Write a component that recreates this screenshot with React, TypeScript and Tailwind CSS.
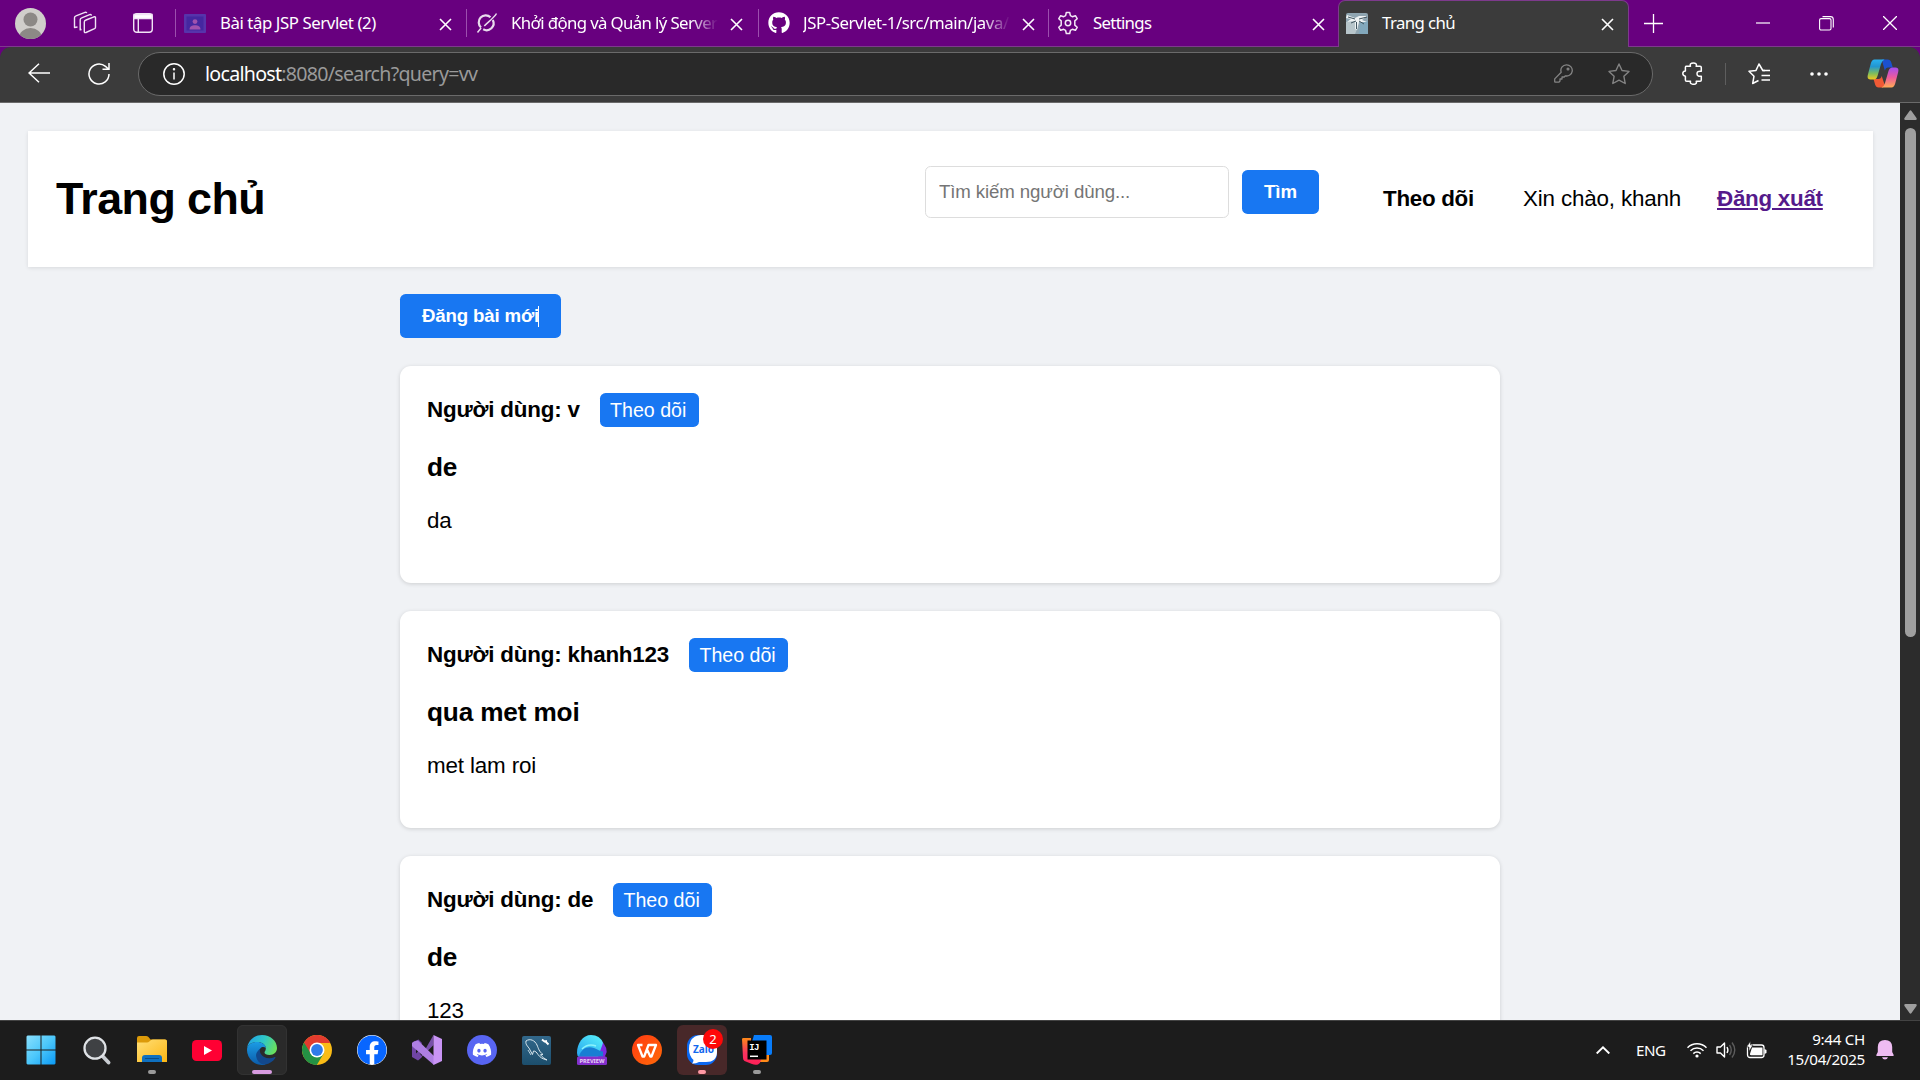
import type { ReactNode } from "react";
import { FaDiscord, FaFacebook, FaGithub } from "react-icons/fa";

const UI = "font-['Noto_Sans','Open_Sans',sans-serif]";

function CloseIcon() {
  return (
    <svg width="13" height="13" viewBox="0 0 13 13" fill="none" stroke="#fff" strokeWidth="1.6">
      <path d="M1 1l11 11M12 1L1 12" />
    </svg>
  );
}

function ClassroomIcon() {
  return (
    <svg className="-ml-[2px]" width="22" height="19" viewBox="0 0 22 19">
      <rect width="22" height="19" rx="1" fill="#5634ab" />
      <rect x="2.5" y="2.5" width="17" height="14" fill="#4527a0" />
      <circle cx="11" cy="7.6" r="2.4" fill="#a052ae" />
      <path d="M5.5 15.5c0-3 2.500-4.200 5.500-4.200s5.500 1.200 5.500 4.200z" fill="#a052ae" />
    </svg>
  );
}

function GrokIcon() {
  return (
    <svg width="22" height="22" viewBox="0 0 22 22" fill="none" stroke="#e8dcec" strokeWidth="2.200">
      <path d="M14.500 5.200A7 7 0 0 0 5 15.500M16.800 8a7 7 0 0 1-9.600 9.300" />
      <path d="M20.500 1.500C18 6 12 10 8.300 14M1.500 20.500l3.600-4.500" strokeWidth="1.500" />
    </svg>
  );
}

function GearIcon() {
  return (
    <svg className="-ml-[2px]" width="24" height="24" viewBox="0 0 24 24" fill="none" stroke="#f3e8f6" strokeWidth="1.500" strokeLinejoin="round">
      <circle cx="12" cy="12" r="2.700" />
      <path d="M10.300 1.500h3.400l.7 3.200 1.900 1 3.100-1 1.800 3-2.400 2.200v4.200l2.400 2.200-1.800 3-3.100-1-1.900 1-.7 3.200h-3.400l-.7-3.200-1.900-1-3.100 1-1.800-3 2.400-2.200V9.900L2.800 7.700l1.800-3 3.100 1 1.900-1z" />
    </svg>
  );
}

function PhotoFavicon() {
  return (
    <svg width="22" height="21" viewBox="0 0 22 21">
      <rect width="22" height="21" rx="2" fill="#8fa5b1" />
      <path d="M0 9l9-1 3 6-3 7H0z" fill="#b7c5ca" />
      <path d="M14 10l8-2v13h-9z" fill="#82a8bc" />
      <path d="M1 2l8 3 4-2 8 0-5 4 5 2-8 0-2 8-2-1 0-8-8 1 4-3-5-1z" fill="#eef2f3" />
      <path d="M2 4l7 2M13 6l8-2M10 8l-5 2M13 8l5 3M10.500 9v7" stroke="#40545f" strokeWidth="1" fill="none" />
    </svg>
  );
}

interface TabProps {
  icon: ReactNode;
  title: string;
  tracking: string;
  width: string;
  fade?: boolean;
}

function BrowserTab({ icon, title, tracking, width, fade }: TabProps) {
  return (
    <div className={`flex h-[46px] shrink-0 items-center ${width}`}>
      <div className="h-[28px] w-px bg-[#9c4fae]" />
      <div className="ml-[6px] flex w-[27px] items-center justify-center">{icon}</div>
      <div
        className={`ml-[11px] w-[209px] overflow-hidden whitespace-nowrap text-[16.8px] leading-[24px] text-white ${tracking} ${
          fade ? "[mask-image:linear-gradient(to_right,#000_180px,transparent_207px)]" : ""
        }`}
      >
        {title}
      </div>
      <div className="ml-[10px] mt-[2px]">
        <CloseIcon />
      </div>
    </div>
  );
}

function TabStrip() {
  return (
    <div className="flex h-[47px] shrink-0 border-b border-[#7d3a8c] bg-[#68007f]">
      <div className="flex w-[175px] items-center">
        <svg className="ml-[15px]" width="31" height="31" viewBox="0 0 31 31">
          <clipPath id="avatar">
            <circle cx="15.500" cy="15.500" r="15.500" />
          </clipPath>
          <g clipPath="url(#avatar)">
            <rect width="31" height="31" fill="#d0cecb" />
            <circle cx="15.500" cy="11.500" r="7" fill="#8c8986" />
            <ellipse cx="15.500" cy="30" rx="11.500" ry="10" fill="#8c8986" />
          </g>
        </svg>
        <svg className="ml-[27px]" width="24" height="24" viewBox="0 0 24 24" fill="none" stroke="#f1e3f5" strokeWidth="1.400" strokeLinejoin="round">
          <path d="M13 9l8-3.200q1.500-.4 1.500 1v9.400q0 1-1 1.500L13 21.500q-1.700.6-1.700-1V11q0-1.400 1.700-2z" />
          <path d="M8.500 18.500l-1.300.3V8.800q0-1.500 1.500-2l8-3.200q1.500-.3 1.700 1" />
          <path d="M4.500 16l-3 .5V6.800q0-1.500 1.500-2l9-3.500q1.400-.4 1.700.9" />
        </svg>
        <svg className="ml-[36px]" width="20" height="20" viewBox="0 0 20 20" fill="none" stroke="#f1e3f5" strokeWidth="1.400">
          <rect x=".7" y=".7" width="18.600" height="18.600" rx="3" />
          <path d="M1 1.500h18v4H1z" fill="#fff" />
          <path d="M5.300 6v13" />
        </svg>
      </div>
      <BrowserTab width="w-[291px]" icon={<ClassroomIcon />} title="Bài tập JSP Servlet (2)" tracking="tracking-[-0.42px]" />
      <BrowserTab width="w-[292px]" icon={<GrokIcon />} title="Khởi động và Quản lý Server" tracking="tracking-[-0.62px]" fade />
      <BrowserTab width="w-[290px]" icon={<FaGithub size={22} color="#fff" />} title="JSP-Servlet-1/src/main/java/" tracking="tracking-[-0.42px]" fade />
      <BrowserTab width="w-[290px]" icon={<GearIcon />} title="Settings" tracking="tracking-[-0.7px]" />
      <div className="z-10 flex h-[47px] w-[291px] shrink-0 items-center rounded-t-[7px] border border-b-0 border-[#7d3a8c] bg-[#3b3b3b]">
        <div className="mb-[2px] ml-[7px]">
          <PhotoFavicon />
        </div>
        <div className="mb-[2px] ml-[14px] w-[219px] text-[16.8px] leading-[24px] tracking-[-0.6px] text-white">Trang chủ</div>
        <CloseIcon />
      </div>
      <div className="flex items-center">
        <svg className="ml-[15px]" width="19" height="19" viewBox="0 0 19 19" stroke="#fff" strokeWidth="1.300">
          <path d="M0 9.500h19M9.500 0v19" />
        </svg>
        <svg className="ml-[93px]" width="14" height="2" viewBox="0 0 14 2">
          <path d="M0 1h14" stroke="#fff" strokeWidth="1.200" />
        </svg>
        <svg className="ml-[49px]" width="15" height="15" viewBox="0 0 15 15" fill="none" stroke="#fff" strokeWidth="1.100">
          <rect x=".6" y="2.600" width="11.400" height="11.400" rx="1.500" />
          <path d="M3.500.6h8q2.800 0 2.800 2.800v8" />
        </svg>
        <svg className="ml-[49px]" width="14" height="14" viewBox="0 0 14 14" stroke="#fff" strokeWidth="1.300">
          <path d="M0 0l14 14M14 0L0 14" />
        </svg>
      </div>
    </div>
  );
}

function CopilotIcon() {
  return (
    <svg width="32" height="29" viewBox="0 0 32 29">
      <defs>
        <linearGradient id="cpA" x1="0" y1="0" x2="0" y2="1">
          <stop offset="0" stopColor="#29b1f0" />
          <stop offset=".35" stopColor="#2296d0" />
          <stop offset=".7" stopColor="#7fbd5c" />
          <stop offset="1" stopColor="#f2c81e" />
        </linearGradient>
        <linearGradient id="cpB" x1="0" y1="0" x2="0" y2="1">
          <stop offset="0" stopColor="#a44df0" />
          <stop offset=".5" stopColor="#ee5b9b" />
          <stop offset="1" stopColor="#ffab55" />
        </linearGradient>
      </defs>
      <path d="M15 .5h5.500q3 0 3.800 3l1.500 5h-5q-2 0-3 3l-2-7z" fill="#1b50cf" />
      <path d="M16 28.500h-4.500q-2.500 0-3.400-3L6.500 20h5q2.500 0 3.200-3l3 9z" fill="#f05a35" />
      <path d="M7.500.5h10q-2.500 1-3.500 4.500l-3.500 12q-1 3.500-4 3.500h-3Q-.2 20.500.8 16l3-11.500Q5 .5 7.500.5z" fill="url(#cpA)" />
      <path d="M24.500 28.500h-10q2.500-1 3.500-4.500l3.500-12q1-3.500 4-3.500h3q3.700 0 2.700 4.500l-3 11.500q-1.200 4-3.700 4z" fill="url(#cpB)" />
    </svg>
  );
}

function Toolbar() {
  return (
    <div className="h-[56px] shrink-0 bg-[#68007f]">
      <div className="flex h-[56px] items-center rounded-t-[11px] border-b border-[#6a6a6a] bg-[#3b3b3b] pb-[2px]">
        <svg className="mb-px ml-[28px]" width="22" height="20" viewBox="0 0 22 20" fill="none" stroke="#fff" strokeWidth="1.500">
          <path d="M22 10H1M11 .7L1 10l10 9.300" />
        </svg>
        <svg className="ml-[38px]" width="22" height="22" viewBox="0 0 22 22" fill="none" stroke="#fff" strokeWidth="1.500">
          <path d="M21 11a10 10 0 1 1-3.500-7.600L20.500 6M21 0v6.300h-6.500" />
        </svg>
        <div className="ml-[28px] flex h-[44px] w-[1515px] items-center rounded-full border border-[#6a6a6a] bg-[#292929]">
          <svg className="ml-[24px]" width="22" height="22" viewBox="0 0 22 22" fill="none" stroke="#fff" strokeWidth="1.500">
            <circle cx="11" cy="11" r="10.200" />
            <path d="M11 9.500v7" />
            <circle cx="11" cy="6.300" r=".5" fill="#fff" />
          </svg>
          <div className="ml-[20px] w-[1349px] whitespace-nowrap text-[19.6px] leading-[28px] tracking-[-0.72px] text-[#9a9a9a]">
            <span className="text-white">localhost</span>:8080/search?query=vv
          </div>
          <svg width="19" height="19" viewBox="0 0 19 19" fill="none" stroke="#848484" strokeWidth="1.300" strokeLinejoin="round">
            <path d="M12.500.8a5.600 5.600 0 1 1-1.300 11l-1 1.200H8v2H6v2l-1 1.200H1.200q-.5 0-.5-.5v-2.800l6.500-6.600A5.600 5.600 0 0 1 12.500.8z" />
            <circle cx="14" cy="5" r=".9" />
          </svg>
          <svg className="ml-[35px]" width="22" height="22" viewBox="0 0 22 22" fill="none" stroke="#848484" strokeWidth="1.400" strokeLinejoin="round">
            <path d="M11 1l3 6.500 7 .9-5.100 4.900 1.300 7.200L11 17.200l-6.200 3.300 1.300-7.200L1 8.400l7-.9z" />
          </svg>
        </div>
        <svg className="ml-[29px]" width="21" height="23" viewBox="0 0 21 23" fill="none" stroke="#fff" strokeWidth="1.500" strokeLinejoin="round">
          <path d="M4 4.300h4.500C7.600 2 9 .9 11.300.9S15 2 14.200 4.300H18q1.300 0 1.300 1.300v3.700c-3-.4-4.300.6-4.300 2.500s1.500 2.900 4.300 2.400V18q0 1.300-1.300 1.300h-3.800c.8 1.900-.5 3-2.700 3s-3.700-1.100-3-3H4.700q-1.300 0-1.300-1.300v-3.800C1.700 14 .8 13.200.8 11.600s1-2.500 2.600-2.600V5.600q0-1.300.6-1.300z" />
        </svg>
        <div className="ml-[22px] h-[22px] w-px bg-[#5e5e5e]" />
        <svg className="ml-[22px]" width="23" height="22" viewBox="0 0 23 22" fill="none" stroke="#fff" strokeWidth="1.500" strokeLinejoin="round">
          <path d="M17 7.500h-2.200L11 1 8 7.400l-7 .9 5 4.900-1.300 7.300 5.800-3" />
          <path d="M14.500 7.500H22M13.500 12.500H22M13.500 17H22" />
        </svg>
        <svg className="ml-[39px] mt-px" width="18" height="4" viewBox="0 0 18 4" fill="#fff">
          <circle cx="2" cy="2" r="1.800" />
          <circle cx="9" cy="2" r="1.800" />
          <circle cx="16" cy="2" r="1.800" />
        </svg>
        <div className="ml-[39px]">
          <CopilotIcon />
        </div>
      </div>
    </div>
  );
}

function PostCard({ user, title, body }: { user: string; title: string; body: string }) {
  return (
    <article className="mb-[28px] h-[217px] shrink-0 rounded-[11px] bg-white px-[27px] pt-[27px] shadow-[0_1px_4px_rgba(0,0,0,0.15)]">
      <div className="flex h-[34px] items-center gap-[20px]">
        <div className="text-[22.4px] font-bold leading-[26px] tracking-[-0.2px]">Người dùng: {user}</div>
        <button className="h-[34px] w-[99px] rounded-[5.600px] bg-[#1877f2] pr-[2px] text-[19.6px] leading-[34px] text-white">Theo dõi</button>
      </div>
      <h3 className="mt-[25px] text-[26.2px] font-bold leading-[30px] tracking-[-0.15px]">{title}</h3>
      <p className="mt-[26px] text-[22.4px] leading-[26px] tracking-[-0.15px]">{body}</p>
    </article>
  );
}

function Page() {
  return (
    <main className="flex h-[917px] w-[1900px] flex-col overflow-hidden bg-[#f0f2f5] px-[28px] pt-[28px] font-['Liberation_Sans',Arial,sans-serif] text-black">
      <header className="flex h-[136px] w-[1845px] shrink-0 items-center bg-white pl-[28px] shadow-[0_1px_4px_rgba(0,0,0,0.1)]">
        <h1 className="w-[869px] pb-[2px] text-[44.8px] font-bold leading-[52px] tracking-[-0.55px]">Trang chủ</h1>
        <div className="mb-[14px] flex items-center">
          <input
            className="h-[52px] w-[304px] rounded-[5.600px] border border-[#ddd] pl-[13px] text-[18.667px] tracking-[-0.12px] placeholder:text-[#757575]"
            placeholder="Tìm kiếm người dùng..."
          />
          <button className="ml-[13px] h-[44px] w-[77px] rounded-[5.600px] bg-[#1877f2] text-[18.667px] font-bold text-white">Tìm</button>
        </div>
        <nav className="flex items-center text-[22.4px] leading-[26px] whitespace-nowrap">
          <span className="ml-[64px] w-[140px] font-bold tracking-[-0.3px]">Theo dõi</span>
          <span className="w-[194px] tracking-[-0.17px]">Xin chào, khanh</span>
          <a className="font-bold tracking-[-0.27px] text-[#551a8b] underline">Đăng xuất</a>
        </nav>
      </header>
      <section className="ml-[372px] mt-[27px] flex w-[1100px] flex-col">
        <button className="mb-[28px] flex h-[44px] w-[161px] shrink-0 items-center rounded-[5.600px] bg-[#1877f2] pl-[22px] text-[18.667px] font-bold text-white">
          <span className="whitespace-nowrap tracking-[-0.16px]">Đăng bài mới</span>
          <span className="-ml-px h-[21px] w-px bg-white" />
        </button>
        <PostCard user="v" title="de" body="da" />
        <PostCard user="khanh123" title="qua met moi" body="met lam roi" />
        <PostCard user="de" title="de" body="123" />
      </section>
    </main>
  );
}

function ScrollBar() {
  return (
    <div className="flex h-[917px] w-[20px] flex-col items-center bg-[#2c2c2c]">
      <svg className="mt-[7px] shrink-0" width="13" height="10" viewBox="0 0 13 10" fill="#9f9f9f">
        <path d="M5.500 1q1-1.500 2 0l5 7q.8 2-1 2h-10q-1.800 0-1-2z" />
      </svg>
      <div className="mt-[8px] h-[509px] w-[11px] rounded-full bg-[#9f9f9f]" />
      <div className="grow" />
      <svg className="mb-[6px] shrink-0" width="13" height="10" viewBox="0 0 13 10" fill="#9f9f9f">
        <path d="M5.500 9q1 1.500 2 0l5-7q.8-2-1-2h-10q-1.800 0-1 2z" />
      </svg>
    </div>
  );
}

function WindowsIcon() {
  return (
    <svg className="-ml-[3px]" width="30" height="30" viewBox="0 0 30 30">
      <defs>
        <linearGradient id="win" x1="0" y1="0" x2="1" y2="1">
          <stop offset="0" stopColor="#8ae0fd" />
          <stop offset=".5" stopColor="#4cc7fb" />
          <stop offset="1" stopColor="#0a99f5" />
        </linearGradient>
      </defs>
      <path d="M1.500.5h13v14H.5v-13zM15.500.5h13l1 1v13h-14zM.5 15.500h14v14h-13l-1-1zM15.500 15.500h14v13l-1 1h-13z" fill="url(#win)" />
    </svg>
  );
}

function SearchIcon() {
  return (
    <svg width="28" height="29" viewBox="0 0 28 29" fill="none">
      <path d="M19 19.500l6.500 7" stroke="#c8ccd1" strokeWidth="3.800" strokeLinecap="round" />
      <circle cx="12" cy="12.200" r="10.500" fill="#3f4144" stroke="#dfe2e6" strokeWidth="2.300" />
    </svg>
  );
}

function FolderIcon() {
  return (
    <svg width="30" height="28" viewBox="0 0 30 28">
      <defs>
        <linearGradient id="fold" x1="0" y1="0" x2="1" y2="1">
          <stop offset="0" stopColor="#ffdf77" />
          <stop offset="1" stopColor="#fcb613" />
        </linearGradient>
      </defs>
      <path d="M0 2q0-2 2-2h7q1.500 0 2.500 1l2 2.500H28q2 0 2 2V10H0z" fill="#dc9a09" />
      <path d="M0 6.500h10q1.300 0 2.300-1l1.200-1q1-.9 2.500-.9H28q2 0 2 2V26H0z" fill="url(#fold)" />
      <path d="M5 26v-4q0-3 3-3h14q3 0 3 3v4z" fill="#0f70bf" />
      <path d="M8.500 22.500h13" stroke="#0a4b86" strokeWidth="1.200" strokeLinecap="round" />
    </svg>
  );
}

function YoutubeIcon() {
  return (
    <svg width="30" height="21" viewBox="0 0 30 21">
      <rect width="30" height="21" rx="4.500" fill="#ff0033" />
      <path d="M12 6l8 4.500-8 4.500z" fill="#fff" />
    </svg>
  );
}

function EdgeIcon() {
  return (
    <svg width="30" height="30" viewBox="0 0 30 30">
      <defs>
        <linearGradient id="edTop" x1="0" y1=".3" x2="1" y2=".6">
          <stop offset="0" stopColor="#21a4e6" />
          <stop offset=".5" stopColor="#2fc7c7" />
          <stop offset="1" stopColor="#6be15a" />
        </linearGradient>
        <linearGradient id="edLeft" x1="0" y1="0" x2="0" y2="1">
          <stop offset="0" stopColor="#1b9ce5" />
          <stop offset="1" stopColor="#0b5ba9" />
        </linearGradient>
      </defs>
      <path d="M0 13.500C1 5.500 7 0 15 0c8.500 0 15 6 15 13 0 4-3 7-7.500 7-3 0-5-1.200-5-2.500 0-1.200 1.300-1.600 1.300-4 0-4-4-6.500-8.300-6.500C5 7 1 9.500 0 13.500z" fill="url(#edTop)" />
      <path d="M0 15C0 10 4.500 7 10 7c5 0 8.500 2.500 8.800 6-1.500-1.300-4-1.300-5.500.5-2.500 3-1 8.500 3 11.500 2 1.500 4 2.500 1.500 4.700A15 15 0 0 1 0 15z" fill="url(#edLeft)" />
      <path d="M13.300 13.500c-2.500 2-5 5-4 8.500 1.200 5 5 7.800 9 7.500 4-.8 7.800-3 10-6.500.5-.8-.2-1.200-1-.8-5.500 2.300-11.500.5-13.700-3.700-.8-1.800-1-3.500-.3-5z" fill="#12488c" />
    </svg>
  );
}

function ChromeIcon() {
  return (
    <svg width="30" height="30" viewBox="0 0 30 30">
      <circle cx="15" cy="15" r="15" fill="#fbbc16" />
      <path d="M15 15L2 7.500A15 15 0 0 0 14.800 30L22 18z" fill="#249244" />
      <path d="M15 8H28.300A15 15 0 0 0 2 7.500L8.800 18.500z" fill="#e33b2e" />
      <circle cx="15" cy="15" r="7.500" fill="#fff" />
      <circle cx="15" cy="15" r="5.900" fill="#2f7bea" />
    </svg>
  );
}

function VisualStudioIcon() {
  return (
    <svg width="30" height="30" viewBox="0 0 30 30">
      <path d="M0 8l2-1.500L6.500 4.500 10 8 6 15l4 7-4 3.500L0 22z" fill="#7045a5" />
      <path d="M4 11.500v7l3.500-3.500z" fill="#1c1c1c" />
      <path d="M10 20L21.500 0v10L7 24.500l-1 1z" fill="#7950aa" />
      <path d="M0 8l2-1.500L6 5.500 22 21v9L1.500 12.500 0 11z" fill="#ae7fe2" />
      <path d="M21.500 0L30 4v22l-8.500 4z" fill="#c994f5" />
    </svg>
  );
}

function DiscordIcon() {
  return (
    <div className="flex h-[30px] w-[30px] items-center justify-center rounded-full bg-[#5865f2]">
      <FaDiscord size={20} color="#fff" />
    </div>
  );
}

function MysqlIcon() {
  return (
    <svg className="-ml-px" width="29" height="29" viewBox="0 0 29 29">
      <defs>
        <linearGradient id="sql" x1="0" y1="0" x2="0" y2="1">
          <stop offset="0" stopColor="#32688b" />
          <stop offset="1" stopColor="#1c4e6c" />
        </linearGradient>
      </defs>
      <rect width="29" height="29" rx="2" fill="url(#sql)" />
      <path d="M4 5c4-3 9-.5 11 4 1.500 3.500 2 6.500 6 9.500l-2.500.2c1.500 2.300 4 3.800 6.500 5.300-4-.8-7-2.500-9-5.500-1.500-2.200-2.500-3.500-4.500-3.500l-1 3.500-2.500-4.500C7 11 3 9 4 5z" fill="none" stroke="#dbe8ee" strokeWidth="1" />
      <path d="M6 14l3 5" stroke="#b9d0da" strokeWidth="1" />
      <path d="M20 3.500l2.500 2 2.500-.5M23.500 5.500l3 3" stroke="#fff" strokeWidth="1.900" fill="none" />
    </svg>
  );
}

function PreviewIcon() {
  return (
    <svg width="30" height="30" viewBox="0 0 30 30">
      <defs>
        <linearGradient id="pvA" x1="0" y1="1" x2=".8" y2="0">
          <stop offset="0" stopColor="#26a2ee" />
          <stop offset="1" stopColor="#55ecfa" />
        </linearGradient>
      </defs>
      <path d="M17 6q7-3 10 3 3 4 2.700 8l-2 5H15z" fill="#7a2be0" />
      <path d="M0 18C0 8 6 0 14 0q9 0 12 8l-5 14H2q-2-1-2-4z" fill="url(#pvA)" />
      <path d="M2 21.500c2-8 9-11 15-8.500 4 1.800 7 3.500 9 3.500v5z" fill="#187ed3" />
      <path d="M5 14q6-6 14-3" stroke="#8bf3fb" strokeWidth="1.600" fill="none" />
      <rect y="21.500" width="30" height="8.500" rx="1.500" fill="#8430cc" />
      <text x="15" y="28" textAnchor="middle" fontFamily="Noto Sans, sans-serif" fontWeight="700" fontSize="5.600" fill="#e8d4f5" textLength="25" lengthAdjust="spacingAndGlyphs">
        PREVIEW
      </text>
    </svg>
  );
}

function WpsIcon() {
  return (
    <svg width="30" height="30" viewBox="0 0 30 30">
      <defs>
        <linearGradient id="wps" x1="0" y1="0" x2="1" y2="1">
          <stop offset="0" stopColor="#ff3a12" />
          <stop offset="1" stopColor="#ff6a08" />
        </linearGradient>
      </defs>
      <circle cx="15" cy="15" r="15" fill="url(#wps)" />
      <path d="M10.500 10H6l4.500 11.500h1.700L16.500 10h7.500l-4.500 11.500h-1.200L14.800 14" fill="none" stroke="#fff" strokeWidth="2.300" strokeLinejoin="round" />
    </svg>
  );
}

function ZaloIcon() {
  return (
    <svg width="30" height="30" viewBox="0 0 30 30">
      <rect width="30" height="30" rx="11" fill="#0b68f2" />
      <path d="M14 0h5q11 0 11 11v6q0 10-11 10h-7q-4 2-7 1.500 1.500-1.500 1.500-3.500Q2 21 2 14 2 5 8 1.500 11 0 14 0z" fill="#fff" />
      <text x="6" y="17.500" fontFamily="Noto Sans, sans-serif" fontWeight="700" fontSize="10" fill="#1268ee" textLength="21">
        Zalo
      </text>
    </svg>
  );
}

function IntellijIcon() {
  return (
    <svg width="30" height="30" viewBox="0 0 30 30">
      <defs>
        <linearGradient id="ijA" x1="0" y1="0" x2="0" y2="1">
          <stop offset="0" stopColor="#ff8a19" />
          <stop offset=".55" stopColor="#f8345f" />
          <stop offset="1" stopColor="#ff1f57" />
        </linearGradient>
      </defs>
      <path d="M18 17h9v8q0 2-2 2h-7z" fill="#ff8a19" />
      <path d="M12 0h16q2 0 2 2v16q0 2-2 2H10V7z" fill="#087cfa" />
      <path d="M0 4q0-1 1.500-1H9v5l10 17q-.5 3-3 4.500-3 .8-6-.5L2.500 26Q1 25 1 23z" fill="url(#ijA)" />
      <rect x="5.500" y="5.500" width="19" height="19" fill="#000" />
      <text x="7.300" y="14.600" fontFamily="Liberation Mono, monospace" fontWeight="700" fontSize="9" fill="#fff" textLength="10">
        IJ
      </text>
      <path d="M8 21.300h8" stroke="#fff" strokeWidth="1.500" />
    </svg>
  );
}

interface TaskItem {
  icon: ReactNode;
  tile?: string;
  mark?: string;
  badge?: string;
}

const tasks: TaskItem[] = [
  { icon: <WindowsIcon /> },
  { icon: <SearchIcon /> },
  { icon: <FolderIcon />, mark: "w-[8px] bg-[#9a9a9a]" },
  { icon: <YoutubeIcon /> },
  { icon: <EdgeIcon />, tile: "bg-[#2a2a2a] outline outline-1 -outline-offset-1 outline-[#323232]", mark: "w-[20px] bg-[#d79be0]" },
  { icon: <ChromeIcon /> },
  { icon: <FaFacebook size={30} color="#0866ff" className="rounded-full bg-white" /> },
  { icon: <VisualStudioIcon /> },
  { icon: <DiscordIcon /> },
  { icon: <MysqlIcon /> },
  { icon: <PreviewIcon /> },
  { icon: <WpsIcon /> },
  { icon: <ZaloIcon />, tile: "bg-[#482829]", mark: "w-[8px] bg-[#ff99a4]", badge: "2" },
  { icon: <IntellijIcon />, mark: "w-[8px] bg-[#9a9a9a]" },
];

function TaskButton({ icon, tile, mark, badge }: TaskItem) {
  return (
    <div className={`relative flex h-[50px] w-[50px] shrink-0 items-center justify-center rounded-[6px] ${tile ?? ""}`}>
      {icon}
      {mark && <div className={`absolute bottom-[1px] left-1/2 h-[4px] -translate-x-1/2 rounded-full ${mark}`} />}
      {badge && (
        <div className="absolute left-[26px] top-[4px] h-[20px] w-[20px] rounded-full bg-[#ff0808] text-center text-[13px] leading-[20px] text-white">
          {badge}
        </div>
      )}
    </div>
  );
}

function Taskbar() {
  return (
    <footer className="flex h-[60px] shrink-0 items-center border-t border-[#434343] bg-[#1c1c1c] pb-px text-white">
      <div className="flex w-[1603px] gap-[5px] pl-[17px]">
        {tasks.map((task, i) => (
          <TaskButton key={i} {...task} />
        ))}
      </div>
      <svg className="-ml-[7px] shrink-0" width="14" height="8" viewBox="0 0 14 8" fill="none" stroke="#fff" strokeWidth="1.900">
        <path d="M.7 7.500L7 1.300l6.300 6.200" />
      </svg>
      <div className="ml-[26px] w-[51px] text-[15.200px] leading-[20px] tracking-[-0.5px]">ENG</div>
      <svg className="shrink-0" width="20" height="16" viewBox="0 0 20 16" fill="none" stroke="#fff" strokeWidth="1.500">
        <path d="M.5 5.800a13.400 13.400 0 0 1 19 0M3.500 8.800a9.200 9.200 0 0 1 13 0M6.300 11.600a5.300 5.300 0 0 1 7.400 0" />
        <circle cx="10" cy="14" r="1.600" fill="#fff" stroke="none" />
      </svg>
      <svg className="ml-[9px] shrink-0" width="22" height="18" viewBox="0 0 22 18" fill="none" stroke="#fff" strokeWidth="1.400">
        <path d="M1 6h3.500L8.500 2v14l-4-4H1z" strokeLinejoin="round" />
        <path d="M11 6q1.800 3 0 6" />
        <path d="M13.500 4q3.500 5 0 10M16 1.500q5.500 7.500 0 15" stroke="#5c5c5c" />
      </svg>
      <svg className="ml-[8px] shrink-0" width="22" height="18" viewBox="0 0 22 18">
        <rect x="1.500" y="4" width="16.500" height="12.500" rx="2.500" fill="none" stroke="#fff" strokeWidth="1.300" />
        <path d="M6 6.500h10.500v7.800H5q-1.500-.2-1-1.500zM18.500 8l2 1v3l-2 1z" fill="#fff" />
        <path d="M4.500 0v4H7L3 10.500V6H.7z" fill="#fff" stroke="#1c1c1c" strokeWidth=".6" />
      </svg>
      <div className="mb-[2px] ml-[17px] w-[80px] whitespace-nowrap text-right text-[15.200px] leading-[20px] tracking-[-0.3px]">
        <div>9:44 CH</div>
        <div>15/04/2025</div>
      </div>
      <svg className="ml-[11px] shrink-0" width="18" height="20" viewBox="0 0 18 20" fill="#eebcf2">
        <path d="M9 0q7 0 7.200 7v5l1.500 3q.3 1-.7 1H1q-1 0-.7-1l1.500-3V7Q2 0 9 0zM6 17.200h6q-.8 2.300-3 2.300t-3-2.300z" />
      </svg>
    </footer>
  );
}

export default function App() {
  return (
    <div className={`flex h-[1080px] w-[1920px] flex-col overflow-hidden ${UI}`}>
      <TabStrip />
      <Toolbar />
      <div className="flex h-[917px] shrink-0">
        <Page />
        <ScrollBar />
      </div>
      <Taskbar />
    </div>
  );
}
